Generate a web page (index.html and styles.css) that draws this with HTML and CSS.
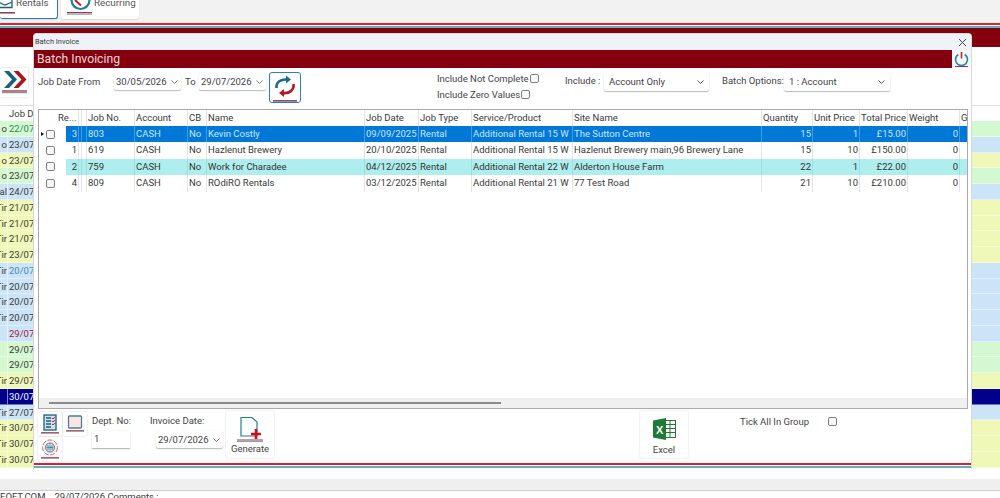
FILE: index.html
```html
<!DOCTYPE html>
<html lang="en">
<head>
<meta charset="utf-8">
<title>Batch Invoice</title>
<link rel="stylesheet" href="styles.css">
</head>
<body>
<div class="app">
  <div class="ribbon">
    <div class="rib-btn rib-rentals">
      <svg class="rib-ico" width="16" height="16" viewBox="0 0 16 16"><path d="M-2 0v7.500h14V0M-2 2l7 3 7-3" fill="none" stroke="#1f5f7a" stroke-width="1.300"/><path d="M0 12.500h15" stroke="#c8323c" stroke-width="1"/><path d="M0 13.500h15" stroke="#7fa8b4" stroke-width="1"/></svg>
      <span>Rentals</span>
    </div>
    <div class="rib-btn rib-recurring">
      <svg class="rib-ico" width="26" height="15" viewBox="0 0 26 15"><path d="M4.500 0a9 9 0 0 0 18 0" fill="none" stroke="#1f8095" stroke-width="2.200"/><path d="M8 0l6 5.500" stroke="#c8202c" stroke-width="2"/><path d="M0 12.500h25" stroke="#d8202c" stroke-width="1"/><path d="M0 14h25" stroke="#6fb3c0" stroke-width="1.500"/></svg>
      <span>Recurring</span>
    </div>
  </div>
  <div class="stripes"><i class="s-red"></i><i class="s-teal"></i><i class="s-dark"></i></div>
  <div class="back-tools">
    <div class="next-btn">
      <svg width="25" height="24" viewBox="0 0 25 24"><path d="M2 0l8 8.500L2 17h5l8-8.500L7 0z" fill="#1b5f80"/><path d="M11.500 0l8 8.500-8 8.500h5l8-8.500-8-8.500z" fill="#a8151f"/><path d="M0 20h25" stroke="#b84049" stroke-width="1.500"/><path d="M0 21.500h25" stroke="#7f9aa5" stroke-width="1.500"/></svg>
    </div>
  </div>
  <div class="back-grid">
    <div class="bhead"><span class="c1"></span><span class="c2">Job D</span></div>
    <div class="brow green"><span class="c1">o</span><span class="c2 tgreen">22/07</span></div>
    <div class="brow blue"><span class="c1">o</span><span class="c2">23/07</span></div>
    <div class="brow yellow"><span class="c1">o</span><span class="c2">23/07</span></div>
    <div class="brow green"><span class="c1">o</span><span class="c2">23/07</span></div>
    <div class="brow blue"><span class="c1">al</span><span class="c2">24/07</span></div>
    <div class="brow yellow"><span class="c1">Tir</span><span class="c2">21/07</span></div>
    <div class="brow yellow"><span class="c1">Tir</span><span class="c2">21/07</span></div>
    <div class="brow yellow"><span class="c1">Tir</span><span class="c2">21/07</span></div>
    <div class="brow yellow"><span class="c1">Tir</span><span class="c2">23/07</span></div>
    <div class="brow blue"><span class="c1">Tir</span><span class="c2 tblue">20/07</span></div>
    <div class="brow blue"><span class="c1">Tir</span><span class="c2">20/07</span></div>
    <div class="brow blue"><span class="c1">Tir</span><span class="c2">20/07</span></div>
    <div class="brow blue"><span class="c1">Tir</span><span class="c2">20/07</span></div>
    <div class="brow blue"><span class="c1"></span><span class="c2 tred">29/07</span></div>
    <div class="brow green"><span class="c1"></span><span class="c2">29/07</span></div>
    <div class="brow green"><span class="c1"></span><span class="c2">29/07</span></div>
    <div class="brow yellow"><span class="c1">Tir</span><span class="c2">29/07</span></div>
    <div class="brow navy"><span class="c1"></span><span class="c2">30/07</span></div>
    <div class="brow blue"><span class="c1">Tir</span><span class="c2">27/07</span></div>
    <div class="brow yellow"><span class="c1">Tir</span><span class="c2">30/07</span></div>
    <div class="brow yellow"><span class="c1">Tir</span><span class="c2">30/07</span></div>
    <div class="brow yellow"><span class="c1">Tir</span><span class="c2">30/07</span></div>
  </div>
  <div class="status-band"></div>
  <div class="status-text"><span>EOFT.COM</span><span>29/07/2026 Comments :</span></div>

  <section class="modal">
    <header class="m-title"><span>Batch Invoice</span><svg class="m-x" width="9" height="9" viewBox="0 0 9 9"><path d="M1 1l7 7M8 1l-7 7" stroke="#444" stroke-width="1"/></svg></header>
    <div class="m-band">
      <span>Batch Invoicing</span>
      <div class="power"><svg width="15" height="17" viewBox="0 0 15 17"><path d="M4.300 3.500a6 6 0 1 0 6.400 0" fill="none" stroke="#1f87a0" stroke-width="1.600"/><path d="M7.500 1v6.500" stroke="#d0202c" stroke-width="1.600"/><path d="M1 15.500h13" stroke="#a8323c" stroke-width="1"/></svg></div>
    </div>
    <div class="filters">
      <label class="lbl lbl-from">Job Date From</label>
      <div class="field date-a"><span>30/05/2026</span><svg class="chev" width="7" height="4" viewBox="0 0 7 4"><path d="M.5.5l3 3 3-3" fill="none" stroke="#777"/></svg></div>
      <label class="lbl lbl-to">To</label>
      <div class="field date-b"><span>29/07/2026</span><svg class="chev" width="7" height="4" viewBox="0 0 7 4"><path d="M.5.5l3 3 3-3" fill="none" stroke="#777"/></svg></div>
      <div class="refresh">
        <svg width="24" height="28" viewBox="0 0 24 28"><path d="M3.500 14C3 8 8 5 14 5.500" fill="none" stroke="#1c6b8a" stroke-width="2.600"/><path d="M13 1.500l5 4-5 4z" fill="#1c6b8a"/><path d="M20.500 10C21.500 16 16 20 10 19" fill="none" stroke="#b01824" stroke-width="2.600"/><path d="M11 15l-5 4 5 4z" fill="#b01824"/><path d="M0 26.500h24" stroke="#b84049" stroke-width="1"/><path d="M0 27.500h24" stroke="#7a9aa5" stroke-width="1"/></svg>
      </div>
      <div class="includes">
        <div class="inc"><span>Include Not Complete</span><i class="cb"></i></div>
        <div class="inc"><span>Include Zero Values</span><i class="cb"></i></div>
      </div>
      <label class="lbl lbl-inc">Include :</label>
      <div class="field sel-inc"><span>Account Only</span><svg class="chev" width="7" height="4" viewBox="0 0 7 4"><path d="M.5.5l3 3 3-3" fill="none" stroke="#555"/></svg></div>
      <label class="lbl lbl-batch">Batch Options:</label>
      <div class="field sel-batch"><span>1 : Account</span><svg class="chev" width="7" height="4" viewBox="0 0 7 4"><path d="M.5.5l3 3 3-3" fill="none" stroke="#555"/></svg></div>
    </div>

    <div class="grid">
      <div class="gh row">
        <span class="pick"></span><span>Re...</span><span></span><span></span><span>Job No.</span><span>Account</span><span>CB</span><span>Name</span><span>Job Date</span><span>Job Type</span><span>Service/Product</span><span>Site Name</span><span>Quantity</span><span>Unit Price</span><span>Total Price</span><span>Weight</span><span>G</span>
      </div>
      <div class="row sel">
        <span class="pick"><b class="arrow"></b><i class="cb"></i></span><span class="num"><em>3</em></span><span></span><span></span><span>803</span><span>CASH</span><span>No</span><span>Kevin Costly</span><span>09/09/2025</span><span>Rental</span><span>Additional Rental 15 W</span><span>The Sutton Centre</span><span class="num">15</span><span class="num">1</span><span class="num">£15.00</span><span class="num">0</span><span></span>
      </div>
      <div class="row">
        <span class="pick"><i class="cb"></i></span><span class="num"><em>1</em></span><span></span><span></span><span>619</span><span>CASH</span><span>No</span><span>Hazlenut Brewery</span><span>20/10/2025</span><span>Rental</span><span>Additional Rental 15 W</span><span>Hazlenut Brewery main,96 Brewery Lane</span><span class="num">15</span><span class="num">10</span><span class="num">£150.00</span><span class="num">0</span><span></span>
      </div>
      <div class="row aqua">
        <span class="pick"><i class="cb"></i></span><span class="num"><em>2</em></span><span></span><span></span><span>759</span><span>CASH</span><span>No</span><span>Work for Charadee</span><span>04/12/2025</span><span>Rental</span><span>Additional Rental 22 W</span><span>Alderton House Farm</span><span class="num">22</span><span class="num">1</span><span class="num">£22.00</span><span class="num">0</span><span></span>
      </div>
      <div class="row">
        <span class="pick"><i class="cb"></i></span><span class="num"><em>4</em></span><span></span><span></span><span>809</span><span>CASH</span><span>No</span><span>ROdiRO Rentals</span><span>03/12/2025</span><span>Rental</span><span>Additional Rental 21 W</span><span>77 Test Road</span><span class="num">21</span><span class="num">10</span><span class="num">£210.00</span><span class="num">0</span><span></span>
      </div>
      <div class="scroll"><i></i></div>
    </div>

    <div class="foot">
      <div class="mini-btns">
        <div class="mini">
          <svg width="18" height="21" viewBox="0 0 18 21"><rect x="3" y="1" width="12" height="15" fill="#cfe2ea" stroke="#1f5f7a" stroke-width="1.300"/><path d="M5 4h5M5 7h5M5 10h5M5 13h5" stroke="#1f5f7a" stroke-width="1.300"/><path d="M11 4l1 1 2-2M11 7l1 1 2-2M11 10l1 1 2-2" fill="none" stroke="#c8202c"/><path d="M0 18.500h18" stroke="#c8505a"/><path d="M0 19.500h18" stroke="#8fb0ba"/></svg>
        </div>
        <div class="mini">
          <svg width="18" height="18" viewBox="0 0 18 18"><rect x="2.500" y="1" width="13" height="12" rx="1" fill="#fbe4e4" stroke="#4f7f92" stroke-width="1.300"/><path d="M0 15.500h18" stroke="#c8505a"/><path d="M0 16.500h18" stroke="#8fb0ba"/></svg>
        </div>
        <div class="mini">
          <svg width="18" height="21" viewBox="0 0 18 21"><circle cx="9" cy="8.500" r="7.500" fill="#f6eef0" stroke="#d06a72" stroke-dasharray="5 1.500"/><circle cx="9" cy="8.500" r="4.500" fill="#d4e4ea" stroke="#4a7a90"/><path d="M5.500 8.500h7M7 6v5M9 5.500v6M11 6v5" stroke="#4a7a90" stroke-width=".8"/><path d="M0 18.500h18" stroke="#c8505a"/><path d="M0 19.500h18" stroke="#8fb0ba"/></svg>
        </div>
      </div>
      <div class="dept">
        <label>Dept. No:</label>
        <div class="input"><span>1</span></div>
      </div>
      <div class="invdate">
        <label>Invoice Date:</label>
        <div class="field date-c"><span>29/07/2026</span><svg class="chev" width="7" height="4" viewBox="0 0 7 4"><path d="M.5.5l3 3 3-3" fill="none" stroke="#777"/></svg></div>
      </div>
      <div class="big gen">
        <svg width="26" height="27" viewBox="0 0 26 27"><path d="M4 1.500h11l5 4.500v14H4z" fill="#fff" stroke="#1f7f95" stroke-width="1.200"/><path d="M19 13v10M14 18h10" stroke="#c8101e" stroke-width="2.600"/><path d="M0 24h26" stroke="#c8202c"/><path d="M0 25.500h26" stroke="#5fb0c0"/></svg>
        <span>Generate</span>
      </div>
      <div class="big excel">
        <svg width="23" height="22" viewBox="0 0 23 22"><rect x="12" y="2.500" width="10.500" height="17" fill="#fff" stroke="#1e7a35"/><path d="M12 6.500h10M12 10.500h10M12 14.500h10M17 3v16" stroke="#1e7a35"/><path d="M0 2.500L13 0v22L0 19.500z" fill="#1e7a35"/><text x="3" y="15.500" class="xl">X</text></svg>
        <span>Excel</span>
      </div>
      <div class="tick"><span>Tick All In Group</span><i class="cb"></i></div>
    </div>
    <div class="m-lines"><i class="l-red"></i><i class="l-teal"></i></div>
  </section>
</div>
</body>
</html>
```
FILE: styles.css
```css
* { box-sizing: border-box; }
html, body { margin: 0; height: 498px; overflow: hidden; background: #fff; }
body { font-family: Roboto, "Noto Sans", sans-serif; font-size: 9.500px; color: #3a3a3a; }
.app { position: relative; width: 1000px; height: 498px; overflow: hidden; }

.ribbon { height: 23px; background: #f2f2f2; display: flex; gap: 3px; align-items: flex-start; }
.rib-btn { height: 19px; background: #fff; display: flex; align-items: flex-start; font-size: 9.800px; color: #555; line-height: 6px; box-shadow: 0 1px 1px #ddd; border-radius: 0 0 3px 3px; }
.rib-rentals { width: 58px; border: solid #2a78b8; border-width: 0 1px 1px 0; }
.rib-recurring { width: 78px; padding-left: 6px; gap: 1px; }
.rib-ico { flex: none; }

.stripes { height: 6px; display: flex; flex-direction: column; }
.stripes i { display: block; }
.s-red { height: 2px; background: #e8202c; margin-bottom: 1px; }
.s-teal { height: 2px; background: #5fb0c0; }
.s-dark { height: 1px; background: #7a0a14; }
.back-tools { height: 76px; position: relative; background: linear-gradient(#85000f 18px, #fff 18px); }
.next-btn { position: absolute; left: -5px; top: 39px; width: 33px; height: 29px; background: #fff; box-shadow: 0 0 2px #ccc; display: flex; align-items: center; justify-content: center; padding-left: 5px; }

.bhead { height: 16px; display: flex; background: #fff; border-top: 1px solid #ddd; line-height: 15px; }
.brow { height: 15.750px; display: flex; line-height: 15px; border-bottom: 1px solid rgba(255,255,255,.45); }
.c1 { width: 8px; flex: none; text-align: right; white-space: nowrap; direction: rtl; border-right: 1px solid rgba(255,255,255,.5); }
.c2 { padding-left: 1px; }
.green { background: #d4f8d0; }
.blue { background: #cce4f7; }
.yellow { background: #f0f8b8; }
.navy { background: #00008b; color: #fff; }
.tgreen { color: #2e8b57; }
.tblue { color: #4a8ab0; }
.tred { color: #a02040; }

.status-band { position: absolute; left: 0; right: 0; top: 479px; height: 12px; background: #efefef; border-bottom: 1px solid #ccc; }
.status-text { position: absolute; left: 0; top: 490px; line-height: 14px; display: flex; gap: 9px; white-space: nowrap; }

.modal { position: absolute; left: 33px; top: 33px; width: 939px; height: 436px; background: #fff; border: 1px solid #d8d8d8; border-bottom: 0; border-radius: 4px 4px 0 0; display: flex; flex-direction: column; }
.m-title { height: 16px; flex: none; background: #eff3f7; font-size: 7.400px; line-height: 16px; padding-left: 1px; display: flex; justify-content: space-between; align-items: center; padding-right: 4px; border-radius: 4px 4px 0 0; }
.m-band { height: 18px; flex: none; background: #85000f; color: #e8d8da; font-size: 12.200px; line-height: 18px; padding-left: 3px; display: flex; justify-content: space-between; }
.power { width: 19px; height: 18px; background: #f6f6f6; display: flex; align-items: center; justify-content: center; }

.filters { height: 41px; flex: none; position: relative; }
.lbl { position: absolute; line-height: 14px; white-space: nowrap; color: #444; }
.lbl-from { left: 4px; top: 7px; }
.lbl-to { left: 151px; top: 7px; }
.lbl-inc { left: 531px; top: 6px; }
.lbl-batch { left: 688px; top: 6px; }
.field { position: absolute; background: #fff; display: flex; align-items: center; justify-content: space-between; box-shadow: 0 1px 1px #bbb, 0 0 1px #ddd; border-radius: 2px; height: 17px; white-space: nowrap; color: #444; }
.date-a { left: 80px; top: 5px; width: 67px; padding: 0 3px 0 2px; }
.date-b { left: 165px; top: 5px; width: 67px; padding: 0 3px 0 2px; }
.sel-inc { left: 570px; top: 4px; width: 105px; height: 19px; padding: 0 5px; }
.sel-batch { left: 750px; top: 4px; width: 106px; height: 19px; padding: 0 5px; }
.refresh { position: absolute; left: 235px; top: 4px; width: 32px; height: 31px; border: 1px solid #2a7fc8; border-radius: 3px; display: flex; justify-content: center; align-items: center; background: #fff; }
.includes { position: absolute; left: 403px; top: 3px; display: flex; flex-direction: column; gap: 2px; color: #444; }
.inc { display: flex; align-items: center; height: 14.500px; gap: 1px; }
.cb { display: inline-block; width: 9px; height: 9px; border: 1px solid #808080; border-radius: 2px; background: #f8f8f8; flex: none; }

.grid { margin: 0 0 0 4px; width: 930px; height: 300px; flex: none; border: 1px solid #aaa; position: relative; overflow: hidden; background: #fff; }
.row { display: grid; grid-template-columns: 18px 22px 3px 5px 48px 53px 19px 158px 54px 53px 101px 189px 51px 47px 48px 52px 8px; height: 16.400px; line-height: 16px; white-space: nowrap; color: #3a3a3a; }
.row > span { padding: 0 1px; overflow: hidden; border-right: 1px solid #e4e4e4; }
.row > span:first-child { border-right: 0; }
.gh { height: 16px; }
.row > .num { text-align: right; }
.pick { position: relative; display: flex; align-items: center; padding: 0 !important; overflow: visible !important; }
.pick .cb { margin-left: 7px; }
.arrow { position: absolute; left: 2px; top: 6px; border: 2px solid transparent; border-left: 3px solid #111; }
.row > .num em { font-style: normal; }
.sel > span:not(:first-child) { background: #0078d7; color: #cfe6fa; border-right-color: #3f9be2; }
.aqua > span:not(:first-child) { background: #afeeee; color: #333; border-right-color: #9fdede; }
.sel > span:nth-child(2) { background: linear-gradient(90deg, #fff 9px, #0078d7 9px); }
.aqua > span:nth-child(2) { background: linear-gradient(90deg, #fff 9px, #afeeee 9px); }
.scroll { position: absolute; left: 0; right: 0; bottom: 0; height: 10px; background: #f0f0f0; }
.scroll i { position: absolute; left: 10px; top: 4px; width: 452px; height: 2px; background: #8a8a8a; }

.foot { flex: 1; position: relative; color: #444; }
.mini-btns { position: absolute; left: 4px; top: 3px; width: 52px; display: flex; flex-wrap: wrap; gap: 1px; }
.mini { width: 24px; height: 24px; background: #fff; box-shadow: 0 0 2px #ccc; border-radius: 2px; display: flex; align-items: center; justify-content: center; }
.dept { position: absolute; left: 58px; top: 5px; }
.dept label, .invdate label { display: block; line-height: 14px; }
.input { width: 38px; height: 17px; margin-top: 3px; box-shadow: 0 1px 1px #bbb, 0 0 1px #ddd; padding-left: 2px; line-height: 16px; background: #fff; }
.invdate { position: absolute; left: 116px; top: 5px; width: 72px; }
.date-c { left: 6px; top: 17px; width: 67px; padding: 0 3px 0 2px; }
.big { position: absolute; top: 2px; background: #fff; box-shadow: 0 0 2px #ccc; border-radius: 2px; display: flex; flex-direction: column; align-items: center; }
.gen { left: 192px; width: 48px; height: 47px; padding-top: 5px; }
.excel { left: 606px; width: 48px; height: 47px; padding-top: 7px; }
.big span { line-height: 14px; margin-top: -1px; }
.excel span { margin-top: 3px; }
.xl { font: bold 11px "Liberation Sans", sans-serif; fill: #fff; }
.tick { position: absolute; left: 706px; top: 6px; display: flex; align-items: center; gap: 19px; line-height: 14px; }
.tick .cb { margin-top: -2px; }
.m-lines { position: absolute; left: 0; right: 0; bottom: 0; height: 6px; }
.m-lines i { display: block; }
.l-red { height: 2px; background: #e81c28; }
.l-teal { height: 2px; margin-top: 1px; background: #5fb0c0; }
```
